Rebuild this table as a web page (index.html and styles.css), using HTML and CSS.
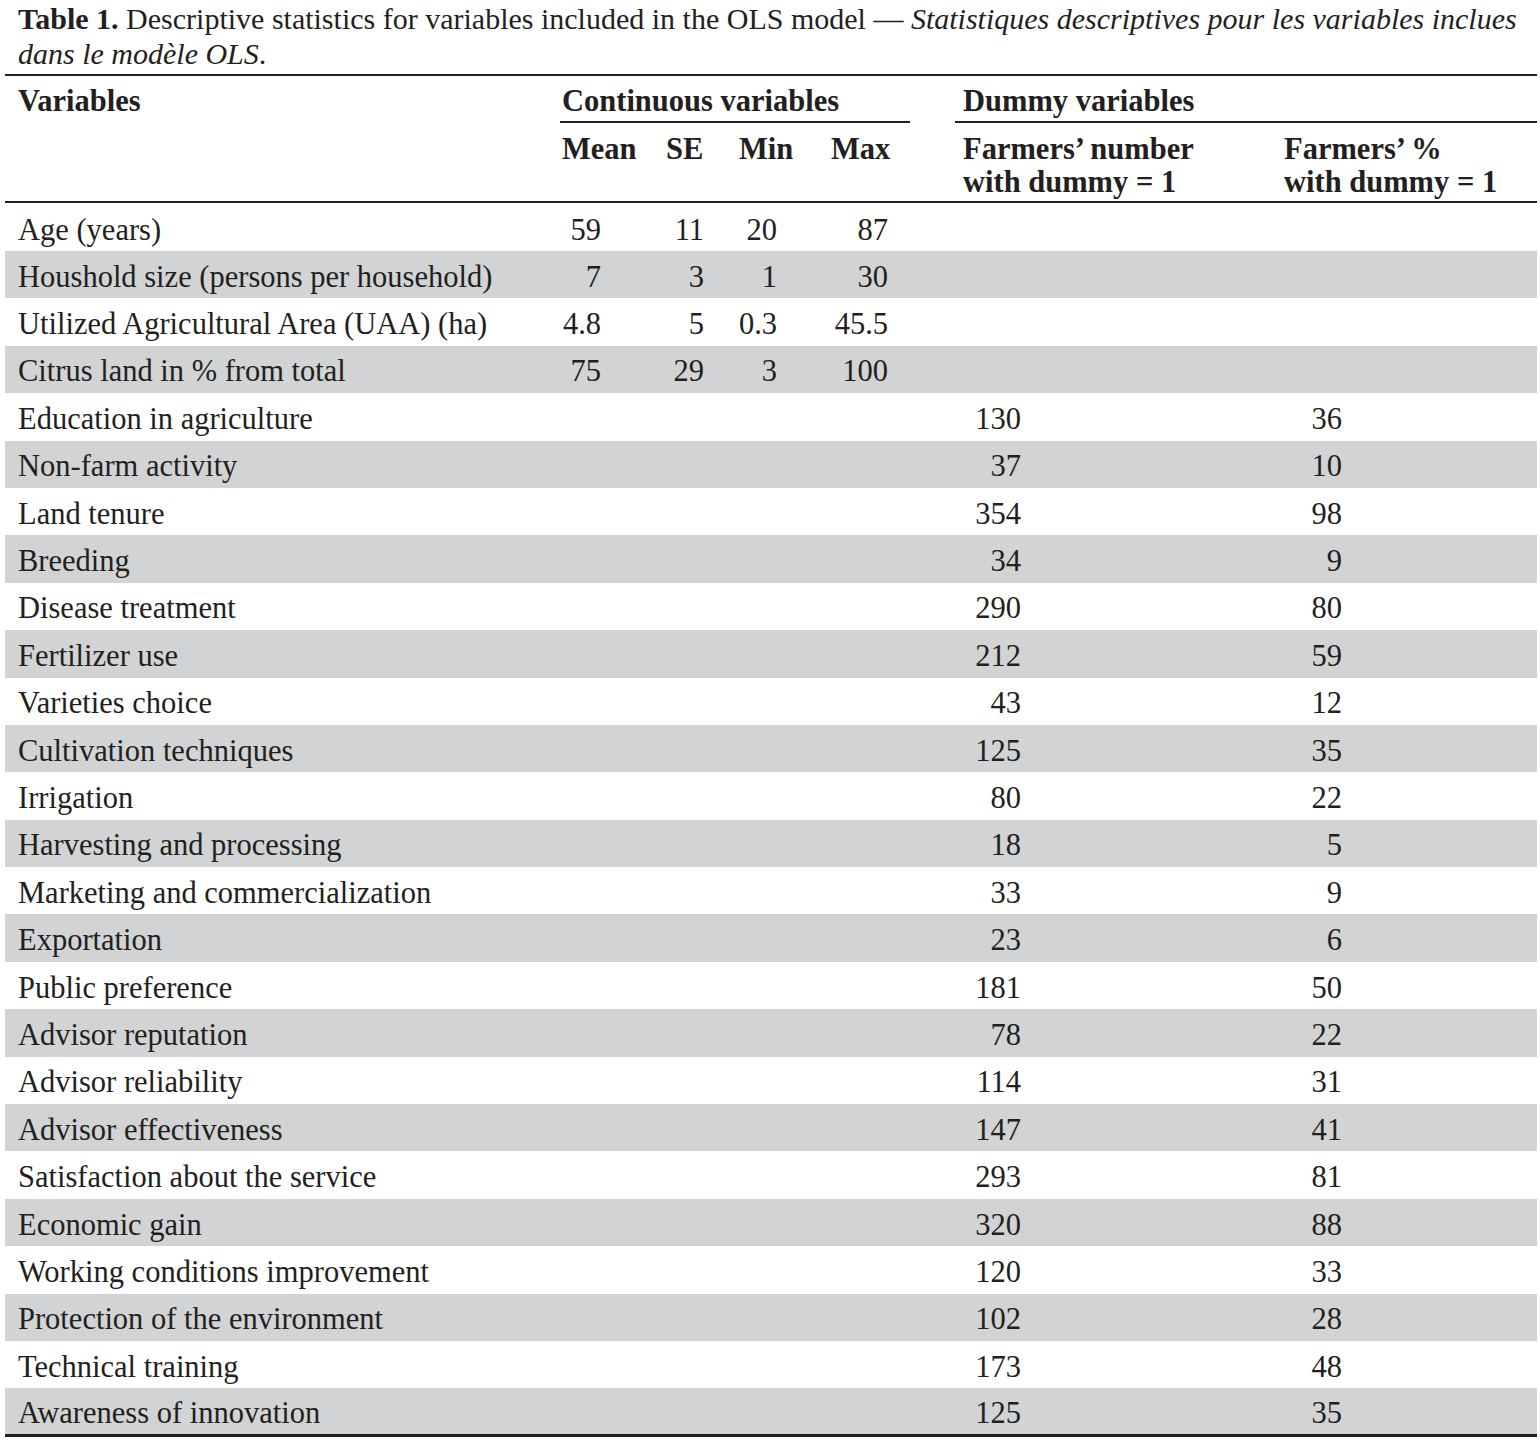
FILE: index.html
```html
<!DOCTYPE html>
<html lang="en">
<head>
<meta charset="utf-8">
<title>Table 1</title>
<link rel="stylesheet" href="styles.css">
</head>
<body>
<div class="page">
  <p class="caption"><b>Table 1.</b> Descriptive statistics for variables included in the OLS model — <i>Statistiques descriptives pour les variables inclues dans le modèle OLS</i>.</p>
  <table class="stats">
    <colgroup>
      <col class="c-var"><col class="c-mean"><col class="c-se"><col class="c-min"><col class="c-max"><col class="c-num"><col class="c-pct">
    </colgroup>
    <thead>
      <tr class="h1">
        <th class="var">Variables</th>
        <th colspan="4" class="grp"><div class="grp-cont">Continuous variables</div></th>
        <th colspan="2" class="grp"><div class="grp-dummy">Dummy variables</div></th>
      </tr>
      <tr class="h2">
        <th></th>
        <th class="mean">Mean</th>
        <th class="se">SE</th>
        <th class="min">Min</th>
        <th class="max">Max</th>
        <th class="num">Farmers’ number<br>with dummy = 1</th>
        <th class="pct">Farmers’ %<br>with dummy = 1</th>
      </tr>
    </thead>
    <tbody>
      <tr class="first"><td class="var">Age (years)</td><td class="mean">59</td><td class="se">11</td><td class="min">20</td><td class="max">87</td><td class="num"></td><td class="pct"></td></tr>
      <tr><td class="var">Houshold size (persons per household)</td><td class="mean">7</td><td class="se">3</td><td class="min">1</td><td class="max">30</td><td class="num"></td><td class="pct"></td></tr>
      <tr><td class="var">Utilized Agricultural Area (UAA) (ha)</td><td class="mean">4.8</td><td class="se">5</td><td class="min">0.3</td><td class="max">45.5</td><td class="num"></td><td class="pct"></td></tr>
      <tr><td class="var">Citrus land in % from total</td><td class="mean">75</td><td class="se">29</td><td class="min">3</td><td class="max">100</td><td class="num"></td><td class="pct"></td></tr>
      <tr><td class="var">Education in agriculture</td><td></td><td></td><td></td><td></td><td class="num">130</td><td class="pct">36</td></tr>
      <tr><td class="var">Non-farm activity</td><td></td><td></td><td></td><td></td><td class="num">37</td><td class="pct">10</td></tr>
      <tr><td class="var">Land tenure</td><td></td><td></td><td></td><td></td><td class="num">354</td><td class="pct">98</td></tr>
      <tr><td class="var">Breeding</td><td></td><td></td><td></td><td></td><td class="num">34</td><td class="pct">9</td></tr>
      <tr><td class="var">Disease treatment</td><td></td><td></td><td></td><td></td><td class="num">290</td><td class="pct">80</td></tr>
      <tr><td class="var">Fertilizer use</td><td></td><td></td><td></td><td></td><td class="num">212</td><td class="pct">59</td></tr>
      <tr><td class="var">Varieties choice</td><td></td><td></td><td></td><td></td><td class="num">43</td><td class="pct">12</td></tr>
      <tr><td class="var">Cultivation techniques</td><td></td><td></td><td></td><td></td><td class="num">125</td><td class="pct">35</td></tr>
      <tr><td class="var">Irrigation</td><td></td><td></td><td></td><td></td><td class="num">80</td><td class="pct">22</td></tr>
      <tr><td class="var">Harvesting and processing</td><td></td><td></td><td></td><td></td><td class="num">18</td><td class="pct">5</td></tr>
      <tr><td class="var">Marketing and commercialization</td><td></td><td></td><td></td><td></td><td class="num">33</td><td class="pct">9</td></tr>
      <tr><td class="var">Exportation</td><td></td><td></td><td></td><td></td><td class="num">23</td><td class="pct">6</td></tr>
      <tr><td class="var">Public preference</td><td></td><td></td><td></td><td></td><td class="num">181</td><td class="pct">50</td></tr>
      <tr><td class="var">Advisor reputation</td><td></td><td></td><td></td><td></td><td class="num">78</td><td class="pct">22</td></tr>
      <tr><td class="var">Advisor reliability</td><td></td><td></td><td></td><td></td><td class="num">114</td><td class="pct">31</td></tr>
      <tr><td class="var">Advisor effectiveness</td><td></td><td></td><td></td><td></td><td class="num">147</td><td class="pct">41</td></tr>
      <tr><td class="var">Satisfaction about the service</td><td></td><td></td><td></td><td></td><td class="num">293</td><td class="pct">81</td></tr>
      <tr><td class="var">Economic gain</td><td></td><td></td><td></td><td></td><td class="num">320</td><td class="pct">88</td></tr>
      <tr><td class="var">Working conditions improvement</td><td></td><td></td><td></td><td></td><td class="num">120</td><td class="pct">33</td></tr>
      <tr><td class="var">Protection of the environment</td><td></td><td></td><td></td><td></td><td class="num">102</td><td class="pct">28</td></tr>
      <tr><td class="var">Technical training</td><td></td><td></td><td></td><td></td><td class="num">173</td><td class="pct">48</td></tr>
      <tr><td class="var">Awareness of innovation</td><td></td><td></td><td></td><td></td><td class="num">125</td><td class="pct">35</td></tr>
    </tbody>
  </table>
</div>
</body>
</html>
```

FILE: styles.css
```css
html, body {
  margin: 0;
  padding: 0;
  background: #ffffff;
}

.page {
  width: 1532px;
  padding: 0 3px 0 5px;
  font-family: "Liberation Serif", "Times New Roman", serif;
  color: #231f20;
  font-size: 30.5px;
}

.caption {
  margin: 0;
  padding: 1px 0 3px 13px;
  line-height: 35px;
  font-size: 30px;
}

.caption b {
  font-weight: bold;
}

.stats {
  width: 1532px;
  border-collapse: collapse;
  table-layout: fixed;
  border-top: 2px solid #231f20;
  border-bottom: 3px solid #231f20;
}

.c-var { width: 550px; }
.c-mean { width: 95px; }
.c-se { width: 70px; }
.c-min { width: 85px; }
.c-max { width: 135px; }
.c-num { width: 320px; }
.c-pct { width: 277px; }

.stats th {
  font-weight: bold;
  text-align: left;
  vertical-align: top;
  padding: 0;
  line-height: 33px;
  white-space: nowrap;
}

.stats thead tr.h2 {
  border-bottom: 2px solid #231f20;
}

.stats tr.h1 th {
  padding-top: 9px;
  padding-bottom: 0;
}

.stats tr.h1 th.var {
  padding-left: 13px;
}

.grp-cont {
  margin-left: 5px;
  margin-right: 30px;
  padding-left: 2px;
  padding-bottom: 3px;
  border-bottom: 2px solid #231f20;
}

.grp-dummy {
  margin-left: 15px;
  padding-left: 8px;
  padding-bottom: 3px;
  border-bottom: 2px solid #231f20;
}

.stats tr.h2 th {
  padding-top: 10px;
  padding-bottom: 2px;
}

.stats tr.h2 th.mean { padding-left: 7px; }
.stats tr.h2 th.se { padding-left: 16px; }
.stats tr.h2 th.min { padding-left: 19px; }
.stats tr.h2 th.max { padding-left: 26px; }
.stats tr.h2 th.num { padding-left: 23px; }
.stats tr.h2 th.pct { padding-left: 24px; }

.stats tbody tr {
  height: 47.4px;
}

.stats tbody tr.first {
  height: 49px;
}

.stats tbody tr.first td {
  padding-top: 6px;
}

.stats tbody td {
  padding: 4px 0 0 0;
  line-height: 32px;
  vertical-align: middle;
  text-align: right;
  white-space: nowrap;
}

.stats tbody tr:nth-child(even) {
  background: #d1d3d4;
}

.stats tbody td.var {
  text-align: left;
  padding-left: 13px;
}

.stats tbody td.mean { padding-right: 49px; }
.stats tbody td.se { padding-right: 16px; }
.stats tbody td.min { padding-right: 28px; }
.stats tbody td.max { padding-right: 52px; }
.stats tbody td.num { padding-right: 239px; }
.stats tbody td.pct { padding-right: 195px; }
```
